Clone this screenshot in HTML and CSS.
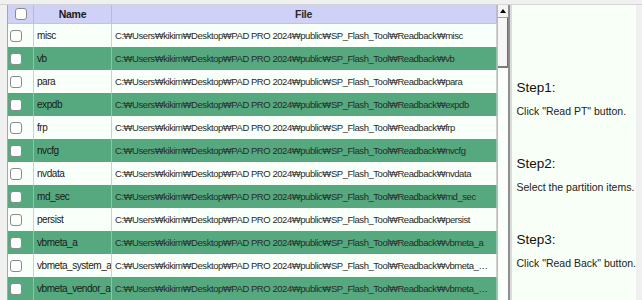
FILE: index.html
```html
<!DOCTYPE html>
<html lang="ko">
<head>
  <meta charset="UTF-8">
  <meta name="viewport" content="width=device-width, initial-scale=1.0">
  <title>Readback</title>
  <link rel="stylesheet" href="styles.css">
</head>
<body>
  <!-- Top edge of the window -->
  <div class="topbar"></div>

  <div class="main">
    <!-- Partition list -->
    <div class="list">
      <div class="row head">
        <div class="cell check"><span class="box"></span></div>
        <div class="cell name">Name</div>
        <div class="cell file">File</div>
      </div>

      <div class="row">
        <div class="cell check"><span class="box"></span></div>
        <div class="cell name">misc</div>
        <div class="cell file">C:₩Users₩kikim₩Desktop₩PAD PRO 2024₩public₩SP_Flash_Tool₩Readback₩misc</div>
      </div>
      <div class="row alt">
        <div class="cell check"><span class="box"></span></div>
        <div class="cell name">vb</div>
        <div class="cell file">C:₩Users₩kikim₩Desktop₩PAD PRO 2024₩public₩SP_Flash_Tool₩Readback₩vb</div>
      </div>
      <div class="row">
        <div class="cell check"><span class="box"></span></div>
        <div class="cell name">para</div>
        <div class="cell file">C:₩Users₩kikim₩Desktop₩PAD PRO 2024₩public₩SP_Flash_Tool₩Readback₩para</div>
      </div>
      <div class="row alt">
        <div class="cell check"><span class="box"></span></div>
        <div class="cell name">expdb</div>
        <div class="cell file">C:₩Users₩kikim₩Desktop₩PAD PRO 2024₩public₩SP_Flash_Tool₩Readback₩expdb</div>
      </div>
      <div class="row">
        <div class="cell check"><span class="box"></span></div>
        <div class="cell name">frp</div>
        <div class="cell file">C:₩Users₩kikim₩Desktop₩PAD PRO 2024₩public₩SP_Flash_Tool₩Readback₩frp</div>
      </div>
      <div class="row alt">
        <div class="cell check"><span class="box"></span></div>
        <div class="cell name">nvcfg</div>
        <div class="cell file">C:₩Users₩kikim₩Desktop₩PAD PRO 2024₩public₩SP_Flash_Tool₩Readback₩nvcfg</div>
      </div>
      <div class="row">
        <div class="cell check"><span class="box"></span></div>
        <div class="cell name">nvdata</div>
        <div class="cell file">C:₩Users₩kikim₩Desktop₩PAD PRO 2024₩public₩SP_Flash_Tool₩Readback₩nvdata</div>
      </div>
      <div class="row alt">
        <div class="cell check"><span class="box"></span></div>
        <div class="cell name">md_sec</div>
        <div class="cell file">C:₩Users₩kikim₩Desktop₩PAD PRO 2024₩public₩SP_Flash_Tool₩Readback₩md_sec</div>
      </div>
      <div class="row">
        <div class="cell check"><span class="box"></span></div>
        <div class="cell name">persist</div>
        <div class="cell file">C:₩Users₩kikim₩Desktop₩PAD PRO 2024₩public₩SP_Flash_Tool₩Readback₩persist</div>
      </div>
      <div class="row alt">
        <div class="cell check"><span class="box"></span></div>
        <div class="cell name">vbmeta_a</div>
        <div class="cell file">C:₩Users₩kikim₩Desktop₩PAD PRO 2024₩public₩SP_Flash_Tool₩Readback₩vbmeta_a</div>
      </div>
      <div class="row">
        <div class="cell check"><span class="box"></span></div>
        <div class="cell name">vbmeta_system_a</div>
        <div class="cell file">C:₩Users₩kikim₩Desktop₩PAD PRO 2024₩public₩SP_Flash_Tool₩Readback₩vbmeta_system_a</div>
      </div>
      <div class="row alt">
        <div class="cell check"><span class="box"></span></div>
        <div class="cell name">vbmeta_vendor_a</div>
        <div class="cell file">C:₩Users₩kikim₩Desktop₩PAD PRO 2024₩public₩SP_Flash_Tool₩Readback₩vbmeta_vendor_a</div>
      </div>
    </div>

    <!-- Vertical scrollbar -->
    <div class="scrollbar">
      <div class="arrow"><span class="tri"></span></div>
      <div class="thumb"></div>
    </div>

    <!-- Help panel -->
    <div class="side">
      <div class="step">
        <div class="step-title">Step1:</div>
        <div class="step-text">Click "Read PT" button.</div>
      </div>
      <div class="step">
        <div class="step-title">Step2:</div>
        <div class="step-text">Select the partition items.</div>
      </div>
      <div class="step">
        <div class="step-title">Step3:</div>
        <div class="step-text">Click "Read Back" button.</div>
      </div>
    </div>
  </div>
</body>
</html>
```

FILE: styles.css
```css
body {
  margin: 0;
  background-color: #f0f0f0;
  color: #1a1a1a;
  font-family: 'Liberation Sans', 'Noto Sans CJK KR', sans-serif;
  font-size: 10px;
  overflow: hidden;
}

/* Top edge */
.topbar {
  height: 4px;
  border-bottom: 1px solid #d4d4d4;
}

.main {
  display: flex;
  height: 295px;
  overflow: hidden;
}

/* Partition list */
.list {
  margin-left: 7px;
  border-left: 1px solid #a8a8a8;
  width: 489px;
  background-color: #f9fff9;
}

.row {
  display: grid;
  grid-template-columns: 26px 78px 385px;
  height: 23px;
  line-height: 23px;
  background-color: #f9fff9;
}

.row.alt {
  background-color: #56a87e;
}

.row.head {
  height: 18px;
  line-height: 18px;
  border-bottom: 1px solid #c4c4d8;
  background-color: #cfd1f7;
  font-weight: bold;
  font-size: 10.5px;
}

.cell {
  border-right: 1px solid #d0d0d0;
  white-space: nowrap;
  overflow: hidden;
}

.row.alt .cell {
  border-right-color: #8cc4a6;
}

.row.head .cell {
  text-align: center;
  border-right-color: #b8bad8;
}

.check {
  display: flex;
  align-items: center;
  padding-left: 2px;
}

.row.head .check {
  justify-content: center;
  padding-left: 0;
}

.name {
  padding-left: 3px;
  letter-spacing: -0.45px;
}

.row.head .name {
  padding-left: 0;
  letter-spacing: -0.3px;
}

.file {
  padding-left: 3px;
  padding-right: 4px;
  font-size: 9.5px;
  letter-spacing: -0.45px;
  color: #2a2a2a;
  text-overflow: ellipsis;
}

.row.head .file {
  font-size: 10.5px;
  letter-spacing: -0.3px;
}

.box {
  display: block;
  width: 10px;
  height: 10px;
  border: 1px solid #8a8a8a;
  border-radius: 3px;
  background-color: #ffffff;
}

/* Scrollbar */
.scrollbar {
  width: 13px;
  border-left: 1px solid #bcbcbc;
  border-right: 2px solid #8e8e8e;
  background-color: #fbfffb;
}

.arrow {
  height: 12px;
  border-bottom: 1px solid #a0a0a0;
  display: flex;
  align-items: center;
  justify-content: center;
  background-color: #f4f4f4;
}

.tri {
  width: 0;
  height: 0;
  border-left: 3px solid transparent;
  border-right: 3px solid transparent;
  border-bottom: 4px solid #000;
}

.thumb {
  height: 48px;
  border-right: 1px solid #6c6c6c;
  border-bottom: 2px solid #7c7c7c;
  background-color: #f6f6f6;
}

/* Help panel */
.side {
  width: 120px;
  padding: 73px 0 0 4px;
  margin-right: 6px;
  background-color: #f7fff7;
  border-left: 2px solid #dcdcdc;
}

.step {
  height: 76px;
}

.step-title {
  font-size: 13.5px;
  line-height: 20px;
  color: #111;
}

.step-text {
  margin-top: 5px;
  font-size: 10.5px;
  line-height: 16px;
  color: #222;
  white-space: nowrap;
}
```
